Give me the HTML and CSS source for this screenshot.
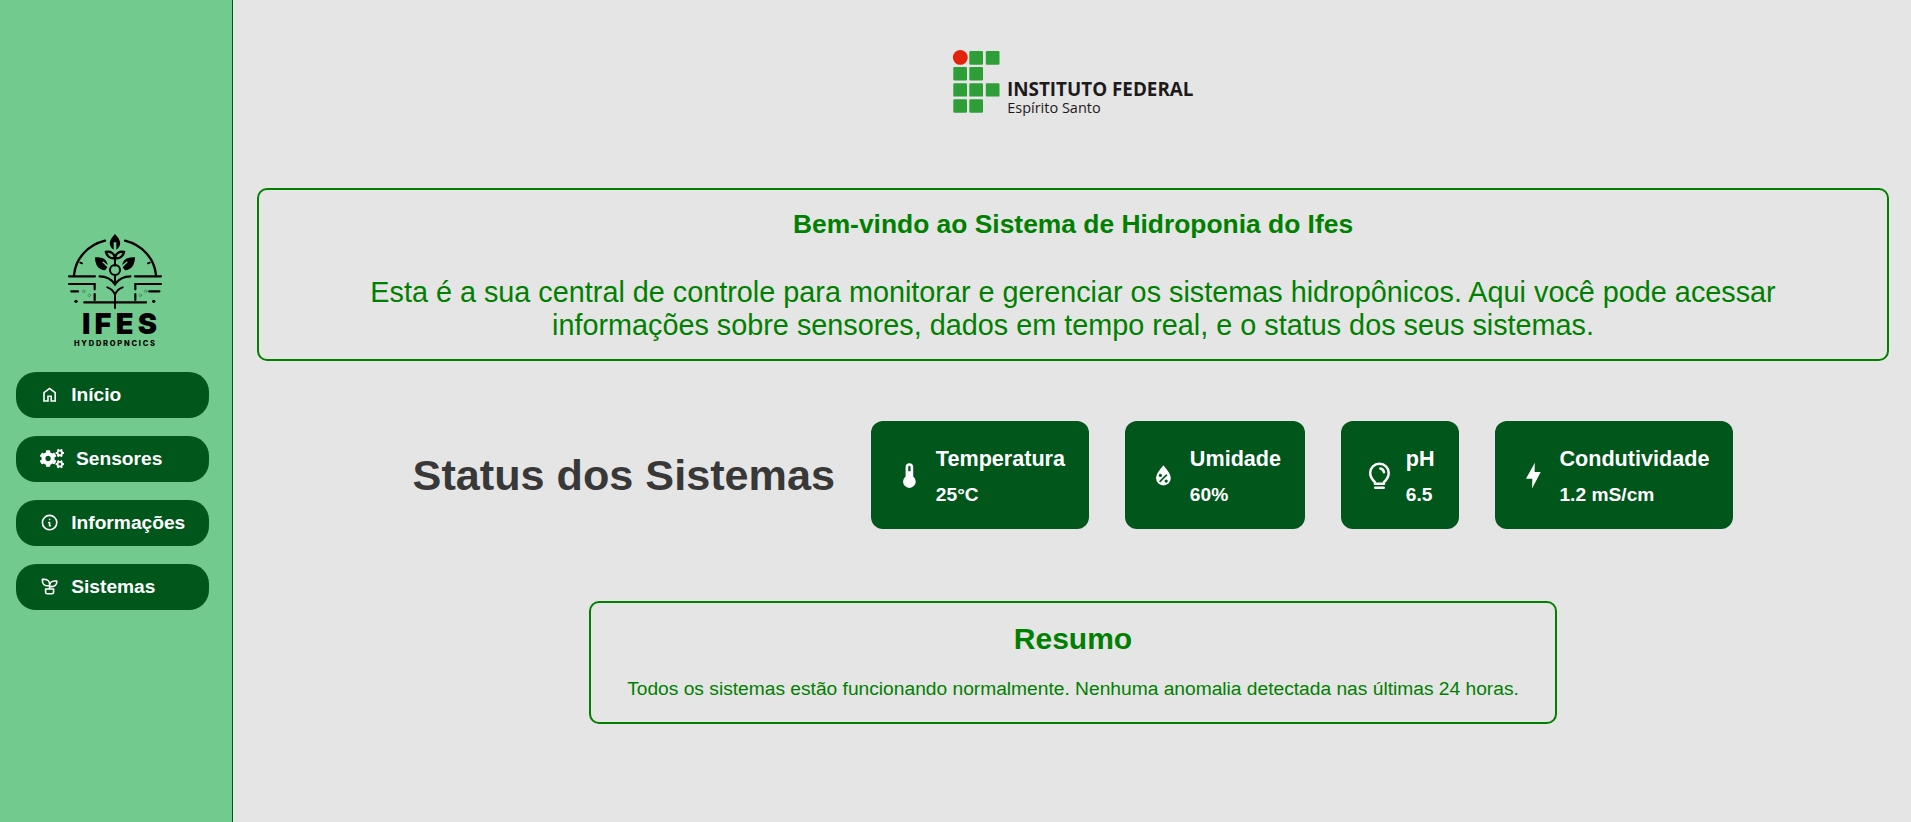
FILE: index.html
```html
<!DOCTYPE html>
<html lang="pt-BR">
<head>
<meta charset="utf-8">
<title>Sistema de Hidroponia do Ifes</title>
<link rel="stylesheet" href="styles.css">
</head>
<body>
<div class="app">
  <aside class="sidebar">
    <svg class="brand" viewBox="0 0 360 390" fill="none" stroke="#000" stroke-width="7" stroke-linecap="round">
      <path d="M57 150C62 100 98 60 150 47M303 150C298 100 262 60 210 47"/>
      <path d="M76 113l5 2M284 113l-5 2" stroke-width="6"/>
      <path d="M42 154h78M240 154h78M42 177h77v16M119 207v18M318 177h-77v16M241 207v18" stroke-width="6.5"/>
      <path d="M49 199h20M283 199h30M88 232h185"/>
      <path d="M180 100v22M180 150v28M180 206v43" stroke-width="6"/>
      <path d="M134 154c22 0 35 8 46 24c11-16 24-24 46-24"/>
      <path d="M157 187c10 3 18 10 23 22c5-12 13-19 23-22" stroke-width="6"/>
      <circle cx="180" cy="135" r="15" stroke-width="6"/>
      <path d="M180 27c-20 20-20 36-4 47V52h8v22c16-11 16-27-4-47z" fill="#000" stroke="none"/>
      <path d="M153 81c14-3 25 4 27 18c-13 3-24-4-27-18zM207 81c-14-3-25 4-27 18c13 3 24-4 27-18z" stroke-width="7"/>
      <path d="M120 97c24-3 37 9 38 23l-14-11l-2 3l15 15c-3 4-5 7-7 9c-20-1-30-17-30-39zM240 97c-24-3-37 9-38 23l14-11l2 3l-15 15c3 4 5 7 7 9c20-1 30-17 30-39z" fill="#000" stroke="none"/>
      <g fill="#000" stroke="none"><circle cx="63" cy="229" r="5"/><circle cx="296" cy="229" r="5"/></g>
      <g stroke="#397b4c" stroke-width="2"><circle cx="86" cy="199" r="4"/><circle cx="103" cy="211" r="4"/><circle cx="272" cy="199" r="4"/><circle cx="256" cy="211" r="4"/></g>
      <text class="brand-name" x="81" y="327" textLength="225">IFES</text>
      <text class="brand-sub" x="57" y="363" textLength="243">HYDDROPNCICS</text>
    </svg>
    <nav class="menu">
      <a class="menu-item">
        <svg class="icon" viewBox="0 0 24 24" fill="currentColor"><path d="M6 19h3v-6h6v6h3v-9l-6-4.500L6 10v9zm-2 2V9l8-6 8 6v12h-7v-6h-2v6H4z"/></svg>
        <span>Início</span>
      </a>
      <a class="menu-item">
        <svg class="icon icon-wide" viewBox="0 0 640 512" fill="currentColor">
          <path id="cog" d="M512.1 191l-8.200 14.300c-3 5.300-9.400 7.500-15.100 5.400-11.800-4.400-22.600-10.700-32.100-18.600-4.600-3.800-5.800-10.500-2.800-15.700l8.200-14.300c-6.900-8-12.300-17.300-15.900-27.400h-16.500c-6 0-11.200-4.300-12.200-10.300-2-12-2.100-24.600 0-37.100 1-6 6.200-10.400 12.200-10.400h16.500c3.600-10.100 9-19.400 15.900-27.400l-8.200-14.300c-3-5.200-1.900-11.900 2.800-15.700 9.500-7.900 20.400-14.200 32.100-18.600 5.700-2.100 12.100.1 15.100 5.400l8.200 14.300c10.500-1.900 21.200-1.900 31.700 0L552 6.300c3-5.300 9.400-7.500 15.100-5.400 11.800 4.400 22.600 10.700 32.100 18.600 4.600 3.800 5.800 10.500 2.800 15.700l-8.200 14.300c6.900 8 12.300 17.300 15.900 27.400h16.500c6 0 11.200 4.300 12.200 10.300 2 12 2.100 24.600 0 37.100-1 6-6.200 10.400-12.200 10.400h-16.500c-3.600 10.100-9 19.400-15.900 27.400l8.200 14.300c3 5.200 1.900 11.900-2.800 15.700-9.500 7.900-20.400 14.200-32.100 18.600-5.700 2.100-12.100-.1-15.100-5.400l-8.200-14.300c-10.400 1.900-21.200 1.900-31.700 0zm-10.500-58.800c38.500 29.600 82.400-14.300 52.800-52.800-38.500-29.700-82.400 14.300-52.800 52.800z"/>
          <use href="#cog" y="299"/>
          <path d="M386.300 286.100l33.700 16.800c10.100 5.800 14.500 18.100 10.500 29.100-8.900 24.200-26.400 46.400-42.600 65.800-7.400 8.900-20.200 11.100-30.300 5.300l-29.100-16.800c-16 13.700-34.600 24.600-54.900 31.700v33.600c0 11.600-8.300 21.600-19.700 23.600-24.600 4.200-50.400 4.400-75.900 0-11.500-2-20-11.900-20-23.600V418c-20.300-7.200-38.900-18-54.900-31.700L74 403c-10 5.800-22.900 3.600-30.300-5.300-16.200-19.400-33.300-41.600-42.200-65.700-4-10.900.4-23.200 10.500-29.100l33.300-16.800c-3.900-20.900-3.900-42.400 0-63.400L12 205.800c-10.100-5.800-14.600-18.100-10.500-29 8.900-24.200 26-46.400 42.200-65.800 7.400-8.900 20.200-11.100 30.300-5.300l29.100 16.800c16-13.700 34.600-24.600 54.900-31.700V57.100c0-11.500 8.200-21.500 19.600-23.500 24.600-4.200 50.500-4.400 76-.1 11.500 2 20 11.900 20 23.600v33.600c20.300 7.200 38.900 18 54.900 31.700l29.100-16.800c10-5.800 22.900-3.600 30.300 5.300 16.200 19.400 33.200 41.600 42.100 65.800 4 10.900.1 23.200-10 29.100l-33.700 16.800c3.900 21 3.900 42.500 0 63.500zm-117.600 21.100c59.200-77-28.700-164.900-105.700-105.700-59.200 77 28.700 164.900 105.700 105.700z"/>
        </svg>
        <span>Sensores</span>
      </a>
      <a class="menu-item">
        <svg class="icon line" viewBox="0 0 24 24"><path d="M3 12a9 9 0 1 0 18 0a9 9 0 0 0-18 0M12 8h.01M11 12h1v4h1"/></svg>
        <span>Informações</span>
      </a>
      <a class="menu-item">
        <svg class="icon line" viewBox="0 0 24 24"><path d="M7 15h10v4a2 2 0 0 1-2 2H9a2 2 0 0 1-2-2v-4zM12 9a6 6 0 0 0-6-6H3v2a6 6 0 0 0 6 6h3M12 11a6 6 0 0 1 6-6h3v1a6 6 0 0 1-6 6h-3M12 15V9"/></svg>
        <span>Sistemas</span>
      </a>
    </nav>
  </aside>

  <main class="main">
    <svg class="institute" viewBox="0 0 242 66">
      <g fill="#2d9e38">
        <rect x="17.300" y="1" width="13.700" height="13.700" rx="1.200"/><rect x="33.800" y="1" width="13.700" height="13.700" rx="1.200"/>
        <rect x="1.300" y="17" width="13.700" height="13.400" rx="1.200"/><rect x="17.300" y="17" width="13.700" height="13.400" rx="1.200"/>
        <rect x="1.300" y="33.200" width="13.700" height="13.400" rx="1.200"/><rect x="17.300" y="33.200" width="13.700" height="13.400" rx="1.200"/><rect x="33.800" y="33.200" width="13.700" height="13.400" rx="1.200"/>
        <rect x="1.300" y="49.300" width="13.700" height="13.400" rx="1.200"/><rect x="17.300" y="49.300" width="13.700" height="13.400" rx="1.200"/>
      </g>
      <circle cx="8.300" cy="7.400" r="7.400" fill="#e3220c"/>
      <text class="inst-name" x="55" y="46.200" textLength="186.500" lengthAdjust="spacingAndGlyphs">INSTITUTO FEDERAL</text>
      <text class="inst-sub" x="55.200" y="62.500" textLength="93.500" lengthAdjust="spacingAndGlyphs">Espírito Santo</text>
    </svg>

    <section class="panel welcome">
      <h1 class="welcome-title">Bem-vindo ao Sistema de Hidroponia do Ifes</h1>
      <p class="welcome-text">Esta é a sua central de controle para monitorar e gerenciar os sistemas hidropônicos. Aqui você pode acessar informações sobre sensores, dados em tempo real, e o status dos seus sistemas.</p>
    </section>

    <section class="status">
      <h2 class="status-title">Status dos Sistemas</h2>
      <div class="card">
        <svg class="card-icon" viewBox="0 0 28.800 28.800"><path fill="currentColor" fill-rule="evenodd" d="M10.600 6.100a3.800 3.800 0 0 1 7.600 0v9.500a6.300 6.300 0 1 1-7.600 0zM13.250 5.900v4.400h2.300V5.900a1.150 1.150 0 0 0-2.300 0z"/></svg>
        <div class="card-body"><h3 class="card-label">Temperatura</h3><p class="card-value">25°C</p></div>
      </div>
      <div class="card">
        <svg class="card-icon" viewBox="0 0 28.800 28.800"><path fill="currentColor" d="M14.400 4.300C10 9.500 7.100 13.600 7.100 17.200a7.300 7.300 0 0 0 14.600 0C21.700 13.600 18.800 9.500 14.400 4.300z"/><g fill="#00561b"><circle cx="11.400" cy="14.400" r="1.600"/><circle cx="17.200" cy="20.100" r="1.600"/></g><path d="M17.900 13.600l-7.300 7.300" fill="none" stroke="#00561b" stroke-width="1.500"/></svg>
        <div class="card-body"><h3 class="card-label">Umidade</h3><p class="card-value">60%</p></div>
      </div>
      <div class="card">
        <svg class="card-icon" viewBox="0 0 28.800 28.800" fill="none" stroke="currentColor" stroke-width="2.500"><path d="M9.900 22.700v-1.500C7 18.400 5.200 16 5.200 12a9.250 9.250 0 0 1 18.500 0c0 4-1.800 6.400-4.700 9.200v1.500z" stroke-linejoin="round"/><path d="M15.400 7.500c2 .4 3.200 1.700 3.600 3.700M10.200 26.800h8.500" stroke-linecap="round"/></svg>
        <div class="card-body"><h3 class="card-label">pH</h3><p class="card-value">6.5</p></div>
      </div>
      <div class="card">
        <svg class="card-icon" viewBox="0 0 28.800 28.800"><path fill="currentColor" d="M15.800 1.800L7 17.800h6.300L13.100 27.600L21.700 11h-6.100z"/></svg>
        <div class="card-body"><h3 class="card-label">Condutividade</h3><p class="card-value">1.2 mS/cm</p></div>
      </div>
    </section>

    <section class="panel summary">
      <h2 class="summary-title">Resumo</h2>
      <p class="summary-text">Todos os sistemas estão funcionando normalmente. Nenhuma anomalia detectada nas últimas 24 horas.</p>
    </section>
  </main>
</div>
</body>
</html>
```
FILE: styles.css
```css
* { box-sizing: border-box; margin: 0; padding: 0; }
body {
  font-family: Arial, "Liberation Sans", sans-serif;
  background: #e5e5e5;
}
.app { display: flex; height: 822px; overflow: hidden; }

.sidebar {
  width: 233px;
  flex: none;
  padding: 225px 23px 0 16px;
  background: #73ca8e;
  border-right: 1px solid #00561b;
}
.brand { display: block; width: 120px; height: 130px; margin: 0 0 17px 39px; }
.brand text { fill: #000; stroke: none; }
.brand-name { font: 900 87px Inter, sans-serif; }
.brand-sub { font: 800 22.5px Inter, sans-serif; }

.menu { display: flex; flex-direction: column; gap: 18px; }
.menu-item {
  display: flex;
  align-items: center;
  gap: 12px;
  height: 46px;
  width: 193px;
  padding: 0 24px;
  border-radius: 20px;
  background: #00561b;
  color: #fff;
  font-size: 19.2px;
  font-weight: bold;
  line-height: 22px;
}
.icon { width: 19.2px; height: 19.2px; flex: none; }
.icon-wide { width: 24px; }
.line {
  fill: none;
  stroke: currentColor;
  stroke-width: 2;
  stroke-linecap: round;
  stroke-linejoin: round;
}

.main {
  flex: 1;
  display: flex;
  flex-direction: column;
  align-items: center;
  padding: 50px 22px 0 24px;
}
.institute { width: 242px; height: 66px; flex: none; }
.inst-name { font: bold 18.8px "Open Sans", sans-serif; fill: #1d1a1b; }
.inst-sub { font: 14.8px "Open Sans", sans-serif; fill: #1d1a1b; }

.panel {
  border: 2px solid #008000;
  border-radius: 10px;
  color: #008000;
  text-align: center;
}
.welcome { width: 100%; height: 173px; margin-top: 72px; padding: 19px 96px 0; }
.welcome-title { font-size: 26.4px; line-height: 30px; }
.welcome-text { margin-top: 37px; font-size: 28.8px; line-height: 33px; }

.status { display: flex; align-items: center; gap: 36px; margin-top: 60px; }
.status-title { padding-top: 1px; font-size: 43.2px; color: #383838; white-space: nowrap; }
.card {
  display: flex;
  align-items: center;
  gap: 12px;
  height: 108px;
  padding: 24px;
  border-radius: 12px;
  background: #00561b;
  color: #fff;
}
.card-icon { width: 28.8px; height: 28.8px; flex: none; }
.card-body { padding-top: 1px; }
.card-label { font-size: 21.6px; line-height: 25px; }
.card-value { margin-top: 13px; font-size: 19.2px; font-weight: bold; line-height: 22px; }

.summary { height: 123px; margin-top: 72px; padding: 19px 36px 0; }
.summary-title { font-size: 30px; line-height: 34px; }
.summary-text { margin-top: 22px; font-size: 19.2px; line-height: 22px; white-space: nowrap; }
```
